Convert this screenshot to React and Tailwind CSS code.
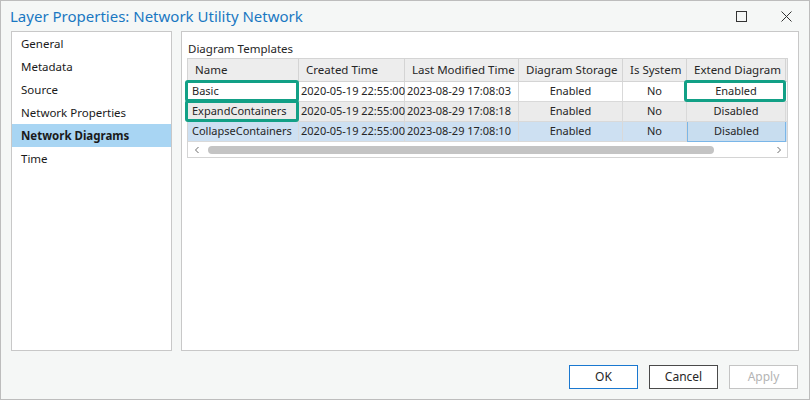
const navItems = ['General', 'Metadata', 'Source', 'Network Properties', 'Network Diagrams', 'Time'];

const columns = ['Name', 'Created Time', 'Last Modified Time', 'Diagram Storage', 'Is System', 'Extend Diagram'];

const rows = [
  { name: 'Basic', created: '2020-05-19 22:55:00', modified: '2023-08-29 17:08:03', storage: 'Enabled', system: 'No', extend: 'Enabled', bg: 'bg-white', mark: true },
  { name: 'ExpandContainers', created: '2020-05-19 22:55:00', modified: '2023-08-29 17:08:18', storage: 'Enabled', system: 'No', extend: 'Disabled', bg: 'bg-[#ebebeb]', mark: true },
  { name: 'CollapseContainers', created: '2020-05-19 22:55:00', modified: '2023-08-29 17:08:10', storage: 'Enabled', system: 'No', extend: 'Disabled', bg: 'bg-[#cde0f2]', selected: true },
];

const gridCols = 'grid grid-cols-[111px_106px_114px_104px_64px_99px_1fr]';

const Mark = () => (
  <div className="absolute -left-[3px] -right-[1px] -top-[2px] -bottom-[1px] rounded-[3px] border-[3px] border-[#12a086] pointer-events-none" />
);

const DataRow = ({ row }) => (
  <div className={`${gridCols} h-5 ${row.bg} text-[11px] text-[#262626]`}>
    <div className="relative flex items-center px-[4px] border-r border-b border-[#d9d9d9] whitespace-nowrap">
      {row.name}
      {row.mark && <Mark />}
    </div>
    <div className="flex items-center px-[2px] border-r border-b border-[#d9d9d9] whitespace-nowrap">{row.created}</div>
    <div className="flex items-center px-[2px] border-r border-b border-[#d9d9d9] whitespace-nowrap">{row.modified}</div>
    <div className="flex items-center justify-center border-r border-b border-[#d9d9d9]">{row.storage}</div>
    <div className="flex items-center justify-center border-r border-b border-[#d9d9d9]">{row.system}</div>
    <div
      className={`relative flex items-center justify-center border-r border-b ${
        row.selected ? 'border-[#7ab6e8] border-l bg-[#c8ddef]' : 'border-[#d9d9d9]'
      }`}
    >
      {row.extend}
      {row.name === 'Basic' && <Mark />}
    </div>
    <div className="border-b border-[#d9d9d9]" />
  </div>
);

export default function App() {
  return (
    <div
      className="w-[810px] h-[400px] bg-[#f5f7f6] border border-[#bdbdbd] flex flex-col"
      style={{ fontFamily: '"Segoe UI", "Noto Sans", sans-serif' }}
    >
      {/* title bar */}
      <div className="h-[30px] flex items-center pl-[9px] pr-[17px] shrink-0">
        <span className="text-[15px] text-[#1a78c2]">Layer Properties: Network Utility Network</span>
        <div className="ml-auto flex items-center gap-[34px]">
          <svg width="11" height="11" viewBox="0 0 11 11">
            <rect x="0.5" y="0.5" width="10" height="10" fill="none" stroke="#333" strokeWidth="1" />
          </svg>
          <svg width="11" height="11" viewBox="0 0 11 11">
            <path d="M0.5 0.5L10.5 10.5M10.5 0.5L0.5 10.5" stroke="#333" strokeWidth="1" />
          </svg>
        </div>
      </div>

      <div className="flex gap-[9px] pl-[10px] pr-[10px] h-[320px]">
        {/* left nav */}
        <div className="w-[161px] bg-white border border-[#c8c8c8] text-[11.5px] text-[#1a1a1a]">
          {navItems.map((item) => (
            <div
              key={item}
              className={`h-[23px] flex items-center pl-[9px] ${
                item === 'Network Diagrams' ? 'bg-[#a8d5f3] font-bold' : ''
              }`}
            >
              {item}
            </div>
          ))}
        </div>

        {/* right content */}
        <div className="flex-1 bg-white border border-[#c8c8c8] px-[5px] pt-[9px]">
          <div className="text-[11.5px] text-[#262626] leading-[16px] pl-[1px]">Diagram Templates</div>
          <div className="mt-[1px] mr-[5px] border border-[#d4d4d4]">
            <div className={`${gridCols} h-[23px] bg-[#ededed] text-[11.5px] text-[#262626]`}>
              {columns.map((c) => (
                <div key={c} className="flex items-center pl-[7px] border-r border-b border-[#d4d4d4] whitespace-nowrap">
                  {c}
                </div>
              ))}
              <div className="border-b border-[#d4d4d4]" />
            </div>
            {rows.map((r) => (
              <DataRow key={r.name} row={r} />
            ))}
            <div className="h-[15px] flex items-center bg-white text-[#777]">
              <svg width="12" height="12" viewBox="0 0 12 12" className="ml-[3px]">
                <path d="M7.5 3L4.5 6L7.5 9" fill="none" stroke="#6b6b6b" strokeWidth="1" />
              </svg>
              <div className="ml-[5px] w-[506px] h-[8px] rounded-full bg-[#c4c4c4]" />
              <svg width="12" height="12" viewBox="0 0 12 12" className="ml-auto mr-[2px]">
                <path d="M4.5 3L7.5 6L4.5 9" fill="none" stroke="#6b6b6b" strokeWidth="1" />
              </svg>
            </div>
          </div>
        </div>
      </div>

      {/* buttons */}
      <div className="flex justify-end gap-[11px] pr-[11px] pt-[14px] text-[12px]">
        <button className="w-[69px] h-[24px] border border-[#1a78d0] bg-white text-[#262626]">OK</button>
        <button className="w-[69px] h-[24px] border border-[#4a4a4a] bg-white text-[#262626]">Cancel</button>
        <button className="w-[69px] h-[24px] border border-[#c4c4c4] bg-white text-[#b4b4b4]">Apply</button>
      </div>
    </div>
  );
}
